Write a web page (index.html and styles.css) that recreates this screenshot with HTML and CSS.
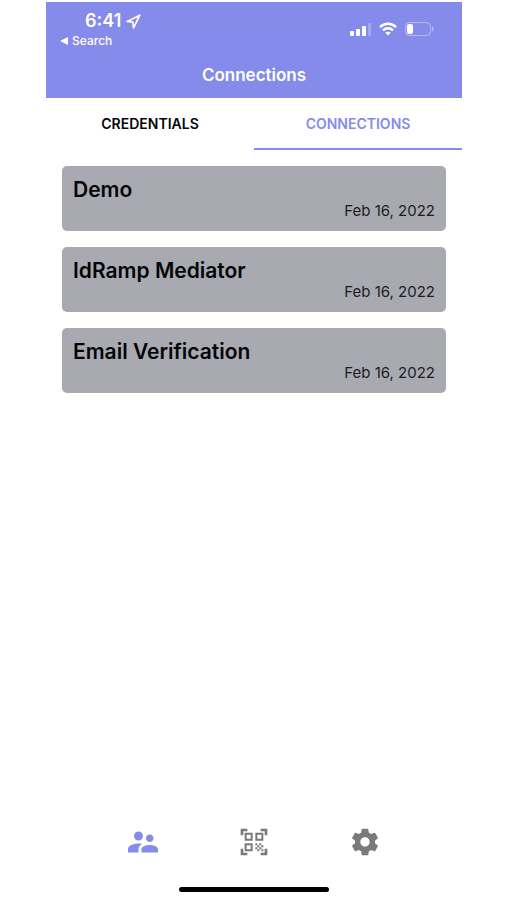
FILE: index.html
```html
<!DOCTYPE html>
<html lang="en">
<head>
    <meta charset="UTF-8">
    <meta name="viewport" content="width=device-width, initial-scale=1.0">
    <title>Connections</title>
    <link rel="stylesheet" href="styles.css">
</head>
<body>
    <div class="app">
        <header class="header">
            <div class="status-bar">
                <div class="status-left">
                    <div class="clock">
                        <span>6:41</span>
                        <svg width="15" height="15" viewBox="0 0 15 15" fill="none" stroke="currentColor" stroke-width="1.7" stroke-linejoin="round">
                            <path d="M1.2 7.4L13.8 1.2L7.6 13.8L6.8 8.2Z"/>
                        </svg>
                    </div>
                    <a href="#" class="back-link">
                        <svg width="8" height="8" viewBox="0 0 8 8" fill="currentColor">
                            <path d="M0 4L8 0V8Z"/>
                        </svg>
                        Search
                    </a>
                </div>
                <div class="status-icons">
                    <svg width="21" height="14" viewBox="0 0 21 14" fill="currentColor">
                        <rect x="0" y="9" width="4" height="5" rx="1"/>
                        <rect x="6" y="7" width="4" height="7" rx="1"/>
                        <rect x="12" y="4" width="4" height="10" rx="1"/>
                        <rect x="18" y="1" width="3" height="13" rx="1" opacity="0.25"/>
                    </svg>
                    <svg width="18" height="14" viewBox="0 0 18 14" fill="none" stroke="currentColor" stroke-width="2.5">
                        <path d="M1 5.2C5.6 0.7 12.4 0.7 17 5.2"/>
                        <path d="M4 8.4C7 5.6 11 5.6 14 8.4"/>
                        <path d="M9 13.6L6.2 10.8C7.8 9.3 10.2 9.3 11.8 10.8Z" fill="currentColor" stroke="none"/>
                    </svg>
                    <svg width="29" height="14" viewBox="0 0 29 14" fill="currentColor">
                        <rect x="0.5" y="0.5" width="25" height="13" rx="4" fill="none" stroke="currentColor" opacity="0.4"/>
                        <rect x="2" y="2" width="6" height="10" rx="2"/>
                        <path d="M27 4.5C29.4 5.5 29.4 8.5 27 9.5Z" opacity="0.4"/>
                    </svg>
                </div>
            </div>
            <h1 class="title">Connections</h1>
        </header>

        <nav class="tabs">
            <button type="button" class="tab">CREDENTIALS</button>
            <button type="button" class="tab active">CONNECTIONS</button>
        </nav>

        <main class="connection-list">
            <article class="card">
                <h2 class="card-name">Demo</h2>
                <p class="card-date">Feb 16, 2022</p>
            </article>
            <article class="card">
                <h2 class="card-name">IdRamp Mediator</h2>
                <p class="card-date">Feb 16, 2022</p>
            </article>
            <article class="card">
                <h2 class="card-name">Email Verification</h2>
                <p class="card-date">Feb 16, 2022</p>
            </article>
        </main>

        <nav class="bottom-nav">
            <button type="button" class="nav-button active" aria-label="Connections">
                <svg width="36" height="36" viewBox="0 0 24 24" fill="currentColor">
                    <path d="M16.5 12c1.38 0 2.49-1.12 2.49-2.5S17.88 7 16.5 7 14 8.12 14 9.5s1.12 2.5 2.5 2.5zM9 11c1.66 0 2.99-1.34 2.99-3S10.66 5 9 5 6 6.34 6 8s1.34 3 3 3zm7.5 3c-1.83 0-5.5.92-5.5 2.75V19h11v-2.25c0-1.83-3.67-2.75-5.5-2.75zM9 13c-2.33 0-7 1.17-7 3.5V19h7v-2.25c0-.85.33-2.34 2.37-3.47C10.5 13.1 9.66 13 9 13z"/>
                </svg>
            </button>
            <button type="button" class="nav-button" aria-label="Scan QR code">
                <svg width="32" height="32" viewBox="0 0 24 24" fill="currentColor">
                    <path d="M9.5 6.5v3h-3v-3h3M11 5H5v6h6V5zM9.5 14.5v3h-3v-3h3M11 13H5v6h6v-6zM17.5 6.5v3h-3v-3h3M19 5h-6v6h6V5zM13 13h1.5v1.5H13zM14.5 14.5H16V16h-1.5zM16 13h1.5v1.5H16zM13 16h1.5v1.5H13zM14.5 17.5H16V19h-1.5zM16 16h1.5v1.5H16zM17.5 14.5H19V16h-1.5zM17.5 17.5H19V19h-1.5zM22 7h-2V4h-3V2h5v5zM22 22v-5h-2v3h-3v2h5zM2 22h5v-2H4v-3H2v5zM2 2v5h2V4h3V2H2z"/>
                </svg>
            </button>
            <button type="button" class="nav-button" aria-label="Settings">
                <svg width="32" height="32" viewBox="0 0 24 24" fill="currentColor">
                    <path d="M19.43 12.98c.04-.32.07-.64.07-.98s-.03-.66-.07-.98l2.11-1.65c.19-.15.24-.42.12-.64l-2-3.46c-.12-.22-.39-.3-.61-.22l-2.49 1c-.52-.4-1.08-.73-1.69-.98l-.38-2.65C14.46 2.18 14.25 2 14 2h-4c-.25 0-.46.18-.49.42l-.38 2.65c-.61.25-1.17.59-1.69.98l-2.49-1c-.23-.09-.49 0-.61.22l-2 3.46c-.13.22-.07.49.12.64l2.11 1.65c-.04.32-.07.65-.07.98s.03.66.07.98l-2.11 1.65c-.19.15-.24.42-.12.64l2 3.46c.12.22.39.3.61.22l2.49-1c.52.4 1.08.73 1.69.98l.38 2.65c.03.24.24.42.49.42h4c.25 0 .46-.18.49-.42l.38-2.65c.61-.25 1.17-.59 1.69-.98l2.49 1c.23.09.49 0 .61-.22l2-3.46c.12-.22.07-.49-.12-.64l-2.11-1.65zM12 15.5c-1.93 0-3.5-1.57-3.5-3.5s1.57-3.5 3.5-3.5 3.5 1.57 3.5 3.5-1.57 3.5-3.5 3.5z"/>
                </svg>
            </button>
        </nav>
        <div class="home-indicator"></div>
    </div>
</body>
</html>
```
FILE: styles.css
```css
* {
    margin: 0;
    padding: 0;
    box-sizing: border-box;
}

body {
    background: #fff;
    color: #050508;
    font-family: Inter, "Liberation Sans", sans-serif;
    padding: 2px 45px 0 46px;
}

button {
    background: none;
    border: none;
    font-family: inherit;
    cursor: pointer;
}

svg {
    display: block;
}

.app {
    display: flex;
    flex-direction: column;
    min-height: calc(100vh - 2px);
}

.header {
    background: #858bea;
    color: #fff;
    padding: 8px 28px 11px 14px;
}

.status-bar {
    display: flex;
    justify-content: space-between;
}

.clock {
    display: flex;
    align-items: center;
    gap: 5px;
    padding-left: 25px;
    font-size: 18px;
    font-weight: 600;
    line-height: 22px;
}

.back-link {
    display: flex;
    align-items: center;
    gap: 4px;
    color: inherit;
    font-size: 12px;
    font-weight: 500;
    line-height: 18px;
    text-decoration: none;
}

.status-icons {
    display: flex;
    align-items: flex-start;
    gap: 8px;
    padding-top: 12px;
}

.title {
    margin-top: 13px;
    padding-left: 14px;
    font-size: 17px;
    font-weight: 600;
    line-height: 24px;
    text-align: center;
}

.tabs {
    display: flex;
}

.tab {
    flex: 1;
    padding: 17px 0 15px;
    border-bottom: 2px solid transparent;
    color: #050508;
    font-size: 14px;
    font-weight: 600;
    line-height: 18px;
}

.tab.active {
    border-bottom-color: #858bea;
    color: #858bea;
}

.connection-list {
    display: flex;
    flex: 1;
    flex-direction: column;
    gap: 16px;
    padding: 16px;
}

.card {
    background: #a9a9b2;
    border-radius: 5px;
    padding: 11px;
}

.card-name {
    font-size: 21px;
    font-weight: 600;
    line-height: 25px;
}

.card-date {
    color: #1c1c22;
    font-size: 15px;
    line-height: 18px;
    text-align: right;
}

.bottom-nav {
    display: flex;
    justify-content: space-around;
    padding: 0 42px;
}

.nav-button {
    display: flex;
    flex: 1;
    align-items: center;
    justify-content: center;
    height: 36px;
    color: #7a7a7a;
}

.nav-button.active {
    color: #858bea;
}

.home-indicator {
    width: 36%;
    height: 5px;
    margin: 27px auto 8px;
    border-radius: 3px;
    background: #000;
}
```
